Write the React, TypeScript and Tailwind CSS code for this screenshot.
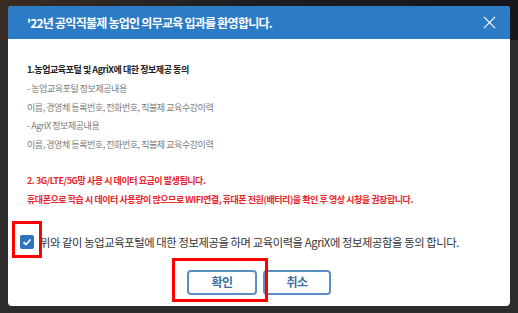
import React, { useState } from 'react';

const font = { fontFamily: '"Noto Sans CJK KR", "Noto Sans", sans-serif' };

const App: React.FC = () => {
  const [agree, setAgree] = useState(true);

  return (
    <div className="relative w-[518px] h-[313px] overflow-hidden bg-[#2c2c2c]" style={font}>
      {/* page behind the modal */}
      <div className="absolute inset-x-0 top-0 h-[40px] bg-gradient-to-r from-[#3a2c22] via-[#1c1d22] to-[#15171c]" />

      <div className="relative pt-[6px] pl-[8px]">
        <div className="w-[502px] h-[300px] bg-white rounded-[4px] overflow-hidden flex flex-col">
          <div className="h-[33px] bg-[#2b7bc5] flex items-center justify-between pl-[19px] pr-[9px]">
            <h2 className="text-[12px] font-bold text-white tracking-[-0.75px]">'22년 공익직불제 농업인 의무교육 입과를 환영합니다.</h2>
            <button className="w-[24px] h-[24px] flex items-center justify-center">
              <svg width="13" height="13" viewBox="0 0 14 14">
                <path d="M1 1L13 13M13 1L1 13" stroke="#fff" strokeWidth="1.3" />
              </svg>
            </button>
          </div>

          <div className="flex-1 pt-[22px] px-[19px] text-[9px] tracking-[-0.45px] leading-[18.8px]">
            <p className="font-bold text-[#222]">1.농업교육포털 및 AgriX에 대한 정보제공 동의</p>
            <p className="text-[#7a7a7a]">- 농업교육포털 정보제공내용</p>
            <p className="text-[#7a7a7a]">이름, 경영체 등록번호, 전화번호, 직불제 교육수강이력</p>
            <p className="text-[#7a7a7a]">- AgriX 정보제공내용</p>
            <p className="text-[#7a7a7a]">이름, 경영체 등록번호, 전화번호, 직불제 교육수강이력</p>

            <div className="mt-[17px] font-bold text-[#e8242c]">
              <p>2. 3G/LTE/5G망 사용 시 데이터 요금이 발생됩니다.</p>
              <p>휴대폰으로 학습 시 데이터 사용량이 많으므로 WIFI연결, 휴대폰 전원(배터리)을 확인 후 영상 시청을 권장합니다.</p>
            </div>

            <label className="mt-[22px] -ml-[7px] flex items-center gap-[6px] cursor-pointer">
              <button
                onClick={() => setAgree(!agree)}
                className={`w-[14px] h-[14px] rounded-[2px] flex items-center justify-center ${agree ? 'bg-[#2f72bd]' : 'border border-[#999] bg-white'}`}
              >
                {agree && (
                  <svg width="10" height="10" viewBox="0 0 10 10">
                    <path d="M1.5 5.2L4 7.5L8.5 2.5" stroke="#fff" strokeWidth="1.8" fill="none" />
                  </svg>
                )}
              </button>
              <span className="text-[11.3px] text-[#333] tracking-[-0.4px] leading-[20px]">
                위와 같이 농업교육포털에 대한 정보제공을 하며 교육이력을 AgriX에 정보제공함을 동의 합니다.
              </span>
            </label>

            <div className="mt-[18px] flex justify-center gap-[6px]">
              <button className="w-[70px] h-[25px] rounded-[4px] border-2 border-[#5b8fc4] text-[12px] font-bold text-[#3c6fa8]">확인</button>
              <button className="w-[68px] h-[25px] rounded-[4px] border-2 border-[#5b8fc4] text-[12px] font-bold text-[#3c6fa8]">취소</button>
            </div>
          </div>
        </div>
      </div>

      {/* highlight boxes */}
      <div className="absolute left-[12px] top-[221px] w-[30px] h-[37px] border-[3px] border-[#ff0000]" />
      <div className="absolute left-[172px] top-[258px] w-[96px] h-[44px] border-[3px] border-[#ff0000]" />
    </div>
  );
};

export default App;
